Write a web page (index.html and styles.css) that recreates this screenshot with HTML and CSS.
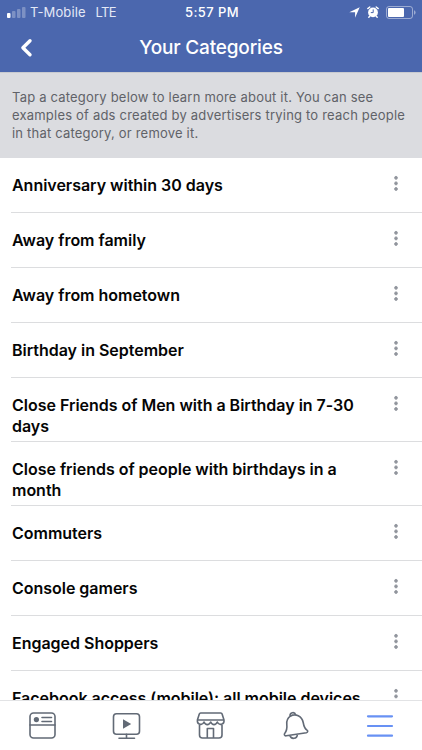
FILE: index.html
```html
<!DOCTYPE html>
<html lang="en">
<head>
<meta charset="utf-8">
<title>Your Categories</title>
<link rel="stylesheet" href="styles.css">
</head>
<body>
<div class="app">
  <header class="header">
    <div class="status">
      <div class="carrier">
        <svg class="signal" width="19" height="12" viewBox="0 0 19 12" fill="#fff"><rect y="7" width="3.5" height="5" rx="1"/><g opacity=".28"><rect x="5" y="5" width="3.5" height="7" rx="1"/><rect x="10" y="3" width="3.5" height="9" rx="1"/><rect x="15" y="1" width="3.5" height="11" rx="1"/></g></svg>
        <span class="operator">T-Mobile</span><span class="network">LTE</span>
      </div>
      <div class="time">5:57 PM</div>
      <div class="indicators">
        <svg width="11" height="11" viewBox="0 0 11 11"><path d="M10.7.3 6.1 10.7V5.2H.3Z" fill="#fff"/></svg>
        <svg width="12" height="12" viewBox="0 0 12 12"><circle cx="6" cy="6.4" r="4.9" fill="#fff"/><path d="M.8 2.6 2.8 1M9.2 1l2 1.6M2.7 10.2 1.8 11.2M9.3 10.2l.9 1" stroke="#fff" stroke-width="1.4" stroke-linecap="round"/><path d="M6.2 3.4v3.2H3.8" fill="none" stroke="#4b67ae" stroke-width="1"/></svg>
        <svg width="30" height="13" viewBox="0 0 30 13"><rect x=".5" y=".5" width="26" height="12" rx="2.5" fill="none" stroke="#fff" stroke-opacity=".45"/><rect x="2" y="2" width="16" height="9" rx="1" fill="#fff"/><path d="M28 4.3q1.6.5 1.6 2.2T28 8.7Z" fill="#fff" opacity=".45"/></svg>
      </div>
    </div>
    <div class="nav">
      <svg class="back" width="14" height="20" viewBox="0 0 14 20"><path d="M11 2.7 3.9 9.7l7.1 7" fill="none" stroke="#fff" stroke-width="3.4" stroke-linecap="round" stroke-linejoin="round"/></svg>
      <h1 class="title">Your Categories</h1>
    </div>
  </header>
  <p class="intro">Tap a category below to learn more about it. You can see<br>examples of ads created by advertisers trying to reach people<br>in that category, or remove it.</p>
  <ul class="list">
    <li class="row"><span>Anniversary within 30 days</span><i class="dots"></i></li>
    <li class="row"><span>Away from family</span><i class="dots"></i></li>
    <li class="row"><span>Away from hometown</span><i class="dots"></i></li>
    <li class="row"><span>Birthday in September</span><i class="dots"></i></li>
    <li class="row"><span>Close Friends of Men with a Birthday in 7-30<br>days</span><i class="dots"></i></li>
    <li class="row"><span>Close friends of people with birthdays in a<br>month</span><i class="dots"></i></li>
    <li class="row"><span>Commuters</span><i class="dots"></i></li>
    <li class="row"><span>Console gamers</span><i class="dots"></i></li>
    <li class="row"><span>Engaged Shoppers</span><i class="dots"></i></li>
    <li class="row"><span>Facebook access (mobile): all mobile devices</span><i class="dots"></i></li>
  </ul>
  <nav class="tabs">
    <svg class="tab" viewBox="0 0 30 30"><rect x="2" y="2" width="25" height="25" rx="3.5"/><path d="M2 14h25M14 6.5h9.5M14 10.5h9.5"/><circle class="solid" cx="8.4" cy="8.6" r="2.6"/></svg>
    <svg class="tab" viewBox="0 0 30 30"><rect x="1.5" y="2.8" width="26" height="20.4" rx="3"/><path d="M14.5 23.2v4M7 27.2h15.5"/><path class="solid" d="m11 8.3 8.2 4.7-8.2 4.7Z"/></svg>
    <svg class="tab" viewBox="0 0 30 30"><path d="M4.6 2h20.2q1 0 1.3 1L28 9H1.4l1.9-6q.3-1 1.3-1ZM1.4 9c-.5 5 5.2 5.7 6.6 2 1.4 3.5 5.2 3.5 6.7 0 1.4 3.5 5.2 3.5 6.6 0 1.5 3.7 7.2 3 6.7-2M3.5 13.2V24q0 3 3 3H23q3 0 3-3V13.2M11.3 27v-9.5h6.2V27"/></svg>
    <svg class="tab bell" viewBox="0 0 30 30"><path d="M8.3 5.2C13.5 2 20 5 21.2 11.5c.7 4 1.2 6 3.8 7.6 1.2.8.8 2.3-.6 2.6L4.3 24.8c-2 .3-2.4-1.5-1.5-2.5 1.5-2 2.5-4.5 2-8.8-.4-3.5 1-6.5 3.5-8.3ZM8 5.2c-.4-4 4.7-4.8 5.7-1.3M7.8 24.3c1.2 4.4 7.4 4 7.6-1.1"/></svg>
    <svg class="tab active" viewBox="0 0 30 30"><path d="M3 5.3h24M3 15h24M3 24.7h24"/></svg>
  </nav>
</div>
</body>
</html>
```
FILE: styles.css
```css
* { box-sizing: border-box; }
body { margin: 0; background: #fff; font-family: Inter, "Liberation Sans", sans-serif; }
.app { width: 422px; height: 750px; display: flex; flex-direction: column; overflow: hidden; }
.header { height: 72px; flex: none; background: #4b67ae; color: #fff; }
.status { height: 24px; display: grid; grid-template-columns: 1fr auto 1fr; align-items: center; padding: 0 8px 0 7px; font-size: 13px; line-height: 24px; }
.carrier { display: flex; align-items: center; color: #e3e9f6; }
.signal { margin-right: 4px; }
.operator { letter-spacing: .1px; }
.network { margin-left: 10px; letter-spacing: -.7px; }
.time { font-weight: 500; letter-spacing: .4px; padding-left: 3px; }
.indicators { display: flex; align-items: center; justify-content: flex-end; gap: 7px; }
.indicators svg:last-child { margin: 0 -2px 0 0; }
.nav { height: 48px; display: grid; grid-template-columns: 60px 1fr 60px; align-items: center; }
.back { margin-left: 19px; }
.title { margin: 0; text-align: center; font-size: 19px; line-height: 48px; font-weight: 500; letter-spacing: -.17px; }
.intro { margin: 0; height: 85.5px; flex: none; border-top: 1px solid #c9cbd0; padding: 15px 11px 0 12px; background: #dbdce0; color: #606268; font-size: 13px; line-height: 18px; letter-spacing: .2px; white-space: nowrap; }
.list { flex: 1; min-height: 0; overflow: hidden; margin: 0; padding: 0 0 0 11px; list-style: none; }
.row { display: flex; justify-content: space-between; min-height: 55.05px; padding: 17.5px 24px 4.5px 1px; border-bottom: 1px solid #dcdddf; color: #050505; font-size: 16px; line-height: 20.5px; font-weight: 600; letter-spacing: -.02px; white-space: nowrap; }
.dots { width: 4px; height: 17px; flex: none; background: radial-gradient(circle at center, #90949c 1.4px, transparent 2.1px) 0 0 / 4px 5.6px; }
.tabs { height: 50px; flex: none; display: grid; grid-template-columns: repeat(5, 1fr); justify-items: center; padding-top: 10px; border-top: 1px solid #e2e3e5; background: #fff; }
.tab { width: 30px; height: 30px; margin-left: 1px; fill: none; stroke: #626a76; stroke-width: 1.6; stroke-linecap: round; stroke-linejoin: round; }
.tab .solid { fill: #626a76; stroke: none; }
.bell { margin-left: 4px; }
.active { margin-left: 0; stroke: #6891f4; stroke-width: 2.2; }
```
